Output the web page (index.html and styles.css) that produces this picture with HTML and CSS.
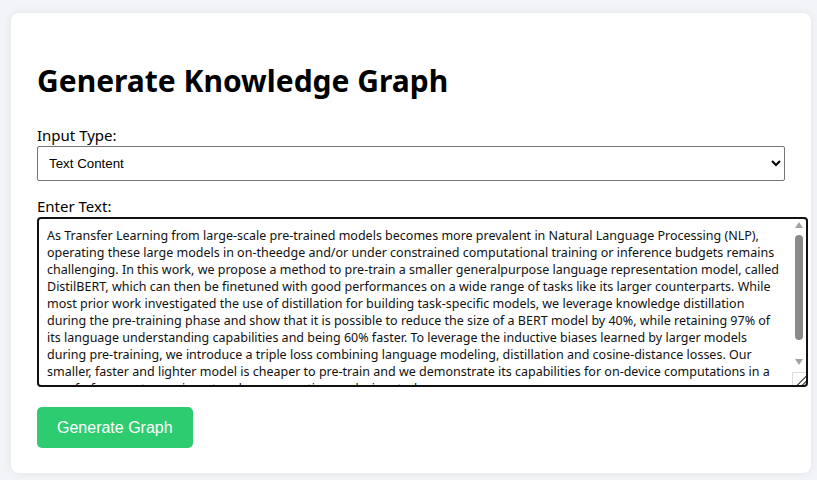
FILE: index.html
```html
<!DOCTYPE html>
<html lang="en">
<head>
<meta charset="utf-8">
<title>Generate Knowledge Graph</title>
<link rel="stylesheet" href="styles.css">
</head>
<body>
<div class="card">
  <h1 class="title">Generate Knowledge Graph</h1>
  <div class="field">
    <label class="label" for="type">Input Type:</label>
    <select id="type" class="select">
      <option>Text Content</option>
      <option>URL</option>
    </select>
  </div>
  <div class="field">
    <label class="label" for="text">Enter Text:</label>
    <div class="textbox">
      <textarea id="text" class="textarea" spellcheck="true">As Transfer Learning from large-scale pre-trained models becomes more prevalent in Natural Language Processing (NLP), operating these large models in on-theedge and/or under constrained computational training or inference budgets remains challenging. In this work, we propose a method to pre-train a smaller generalpurpose language representation model, called DistilBERT, which can then be finetuned with good performances on a wide range of tasks like its larger counterparts. While most prior work investigated the use of distillation for building task-specific models, we leverage knowledge distillation during the pre-training phase and show that it is possible to reduce the size of a BERT model by 40%, while retaining 97% of its language understanding capabilities and being 60% faster. To leverage the inductive biases learned by larger models during pre-training, we introduce a triple loss combining language modeling, distillation and cosine-distance losses. Our smaller, faster and lighter model is cheaper to pre-train and we demonstrate its capabilities for on-device computations in a proof-of-concept experiment and a comparative on-device study.</textarea>
      <div class="scrollbar" aria-hidden="true">
        <span class="arrow arrow-up"></span>
        <span class="thumb"></span>
        <span class="arrow arrow-down"></span>
        <span class="resizer"></span>
      </div>
    </div>
  </div>
  <button class="button" type="button">Generate Graph</button>
</div>
</body>
</html>
```

FILE: styles.css
```css
html, body {
  margin: 0;
}
body {
  background: #f3f4f8;
  padding: 13px 6px 7px 11px;
  font-family: "Noto Sans", "Open Sans", sans-serif;
  color: #000;
}
.card {
  width: 800px;
  box-sizing: border-box;
  background: #fff;
  border-radius: 8px;
  box-shadow: 0 0 10px rgba(0, 0, 0, 0.08);
  padding: 20px 26px 25px 26px;
}
.title {
  font-size: 30px;
  font-weight: 700;
  margin: 27px 0 23px;
  line-height: 42px;
}
.field {
  margin-bottom: 15px;
}
.label {
  display: block;
  font-size: 15px;
  line-height: 21px;
}
.select {
  display: block;
  width: 100%;
  height: 35px;
  box-sizing: border-box;
  border: 1px solid #767676;
  border-radius: 2px;
  background: #fff;
  padding: 0 7px;
  font-family: "Liberation Sans", Arial, sans-serif;
  font-size: 13.33px;
  color: #000;
}
.textbox {
  display: flex;
  width: calc(100% + 23px);
  height: 170px;
  box-sizing: border-box;
  border: 2px solid #111;
  border-radius: 4px;
  margin-bottom: 20px;
  background: #fff;
}
.textarea {
  flex: 1;
  min-width: 0;
  border: none;
  outline: none;
  resize: none;
  overflow: hidden;
  background: transparent;
  padding: 8px 8px 8px 8px;
  margin: 0;
  font-family: "Noto Sans", "Open Sans", sans-serif;
  font-size: 12.5px;
  line-height: 17px;
  color: #111;
}
.scrollbar {
  width: 14px;
  flex: none;
  display: flex;
  flex-direction: column;
  align-items: center;
  padding-top: 3px;
}
.arrow {
  width: 0;
  height: 0;
  border-left: 4.5px solid transparent;
  border-right: 4.5px solid transparent;
}
.arrow-up {
  border-bottom: 6px solid #a3a3a3;
}
.arrow-down {
  border-top: 6px solid #a3a3a3;
  margin-top: auto;
  margin-bottom: 7px;
}
.thumb {
  width: 8px;
  height: 105px;
  margin-top: 7px;
  background: #8a8a8a;
  border-radius: 4px;
}
.resizer {
  align-self: stretch;
  height: 12px;
  border-left: 1px solid #dcdcdc;
  border-top: 1px solid #dcdcdc;
  background:
    linear-gradient(135deg, transparent 62%, #666 62%, #666 70%, transparent 70%, transparent 82%, #666 82%, #666 90%, transparent 90%);
}
.button {
  display: block;
  background: #2ecc71;
  color: #fff;
  border: none;
  border-radius: 5px;
  padding: 0 20px;
  height: 41px;
  font-family: "Liberation Sans", Arial, sans-serif;
  font-size: 16px;
}
```
